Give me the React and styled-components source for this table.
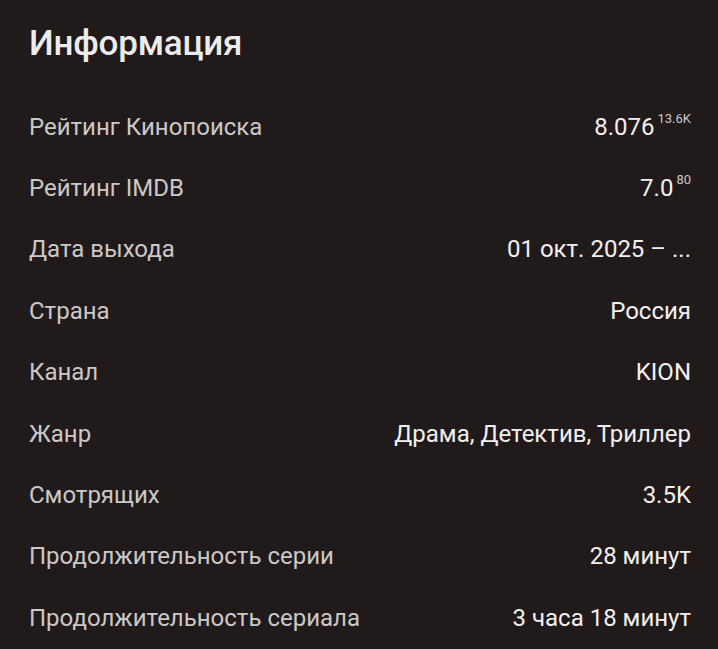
import React from 'react';
import styled, { createGlobalStyle } from 'styled-components';

const GlobalStyle = createGlobalStyle`
  html, body {
    margin: 0;
    background: #211a1a;
  }
  body {
    font-family: Roboto, "Noto Sans", sans-serif;
  }
`;

const Panel = styled.section`
  box-sizing: border-box;
  width: 718px;
  height: 649px;
  padding: 22px 27px 0 29px;
  background: #211a1a;
  overflow: hidden;
`;

const Title = styled.h2`
  margin: 0 0 30px;
  font-size: 35px;
  font-weight: 500;
  line-height: 44px;
  letter-spacing: -0.2px;
  color: #ececec;
`;

const Row = styled.div`
  display: flex;
  justify-content: space-between;
  align-items: center;
  height: 61.4px;
  font-size: 24px;
`;

const Label = styled.span`
  color: #cbc8c8;
`;

const Value = styled.span`
  color: #f1f0f0;
  white-space: nowrap;
`;

const Count = styled.sup`
  font-size: 13px;
  color: #cbc8c8;
  margin-left: 3px;
  vertical-align: 12px;
  line-height: 0;
`;

const rows = [
  { label: 'Рейтинг Кинопоиска', value: '8.076', count: '13.6K' },
  { label: 'Рейтинг IMDB', value: '7.0', count: '80' },
  { label: 'Дата выхода', value: '01 окт. 2025 – ...' },
  { label: 'Страна', value: 'Россия' },
  { label: 'Канал', value: 'KION' },
  { label: 'Жанр', value: 'Драма, Детектив, Триллер' },
  { label: 'Смотрящих', value: '3.5K' },
  { label: 'Продолжительность серии', value: '28 минут' },
  { label: 'Продолжительность сериала', value: '3 часа 18 минут' },
];

export default function App() {
  return (
    <>
      <GlobalStyle />
      <Panel>
        <Title>Информация</Title>
        {rows.map((r) => (
          <Row key={r.label}>
            <Label>{r.label}</Label>
            <Value>
              {r.value}
              {r.count && <Count>{r.count}</Count>}
            </Value>
          </Row>
        ))}
      </Panel>
    </>
  );
}
